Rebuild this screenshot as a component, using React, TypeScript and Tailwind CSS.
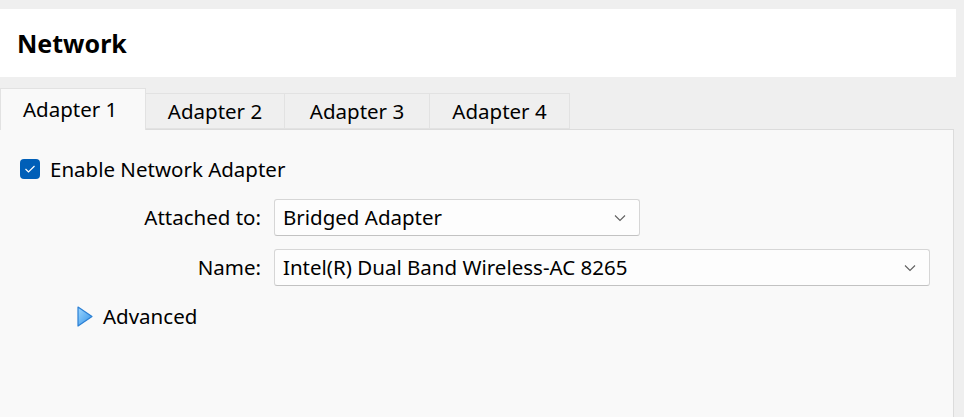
import React from "react";

const font = { fontFamily: '"Noto Sans", "Open Sans", sans-serif' };

function Chevron() {
  return (
    <svg width="12" height="8" viewBox="0 0 12 8" className="shrink-0">
      <path d="M1 1.5 L6 6.5 L11 1.5" fill="none" stroke="#5f5f5f" strokeWidth="1.1" />
    </svg>
  );
}

function Combo({ value, width }: { value: string; width: string }) {
  return (
    <div
      className={`${width} h-[37px] flex items-center justify-between pl-[8px] pr-[13px] bg-[#fdfdfd] border border-[#d6d6d6] border-b-[#c2c2c2] rounded-[3px] text-[20.5px] leading-none text-black`}
    >
      <span>{value}</span>
      <Chevron />
    </div>
  );
}

export default function App() {
  const tabs = [
    { label: "Adapter 2", w: "w-[139px]" },
    { label: "Adapter 3", w: "w-[145px]" },
    { label: "Adapter 4", w: "w-[140px]" },
  ];
  return (
    <div
      className="w-[964px] h-[417px] bg-[#efefef] pt-[9px] flex flex-col overflow-hidden text-black"
      style={font}
    >
      {/* Header */}
      <div className="w-[956px] h-[68px] bg-white flex items-center pl-[17px] shrink-0">
        <h1 className="text-[25px] font-bold leading-none">Network</h1>
      </div>

      {/* Tabs */}
      <div className="flex items-end mt-[11px] h-[41px] shrink-0">
        <div className="relative z-10 -mb-px w-[146px] h-[42px] bg-[#f9f9f9] border border-b-0 border-[#e2e2e2] flex items-center pl-[22px] text-[20.5px] leading-none">
          Adapter 1
        </div>
        {tabs.map((t) => (
          <div
            key={t.label}
            className={`${t.w} h-[36px] border border-l-0 border-[#e2e2e2] bg-[#efefef] flex items-center justify-center text-[20.5px] leading-none`}
          >
            {t.label}
          </div>
        ))}
      </div>

      {/* Panel */}
      <div className="w-[954px] flex-1 bg-[#f9f9f9] border-t border-r border-[#dcdcdc] flex flex-col">
        <div className="flex items-center gap-[10px] ml-[20px] mt-[27px] h-[24px]">
          <div className="w-[20px] h-[20px] rounded-[4px] bg-[#005fb8] flex items-center justify-center">
            <svg width="12" height="10" viewBox="0 0 12 10">
              <path d="M1.5 5 L4.5 8 L10.5 2" fill="none" stroke="white" strokeWidth="1.2" />
            </svg>
          </div>
          <span className="text-[20.5px] leading-none">Enable Network Adapter</span>
        </div>

        <div className="grid grid-cols-[261px_auto] gap-x-[13px] gap-y-[13px] mt-[18px] items-center">
          <span className="text-right text-[20.5px] leading-none">Attached to:</span>
          <Combo value="Bridged Adapter" width="w-[366px]" />
          <span className="text-right text-[20.5px] leading-none">Name:</span>
          <Combo value="Intel(R) Dual Band Wireless-AC 8265" width="w-[656px]" />
        </div>

        <div className="flex items-center gap-[10px] ml-[77px] mt-[18px] h-[24px]">
          <svg width="16" height="21" viewBox="0 0 16 21">
            <defs>
              <linearGradient id="tri" x1="0" y1="0" x2="1" y2="1">
                <stop offset="0" stopColor="#9fd8ff" />
                <stop offset="1" stopColor="#2f8fe6" />
              </linearGradient>
            </defs>
            <path d="M1 1 L15 10.5 L1 20 Z" fill="url(#tri)" stroke="#2a7fd4" strokeWidth="1.2" strokeLinejoin="round" />
          </svg>
          <span className="text-[20.5px] leading-none">Advanced</span>
        </div>
      </div>
    </div>
  );
}
